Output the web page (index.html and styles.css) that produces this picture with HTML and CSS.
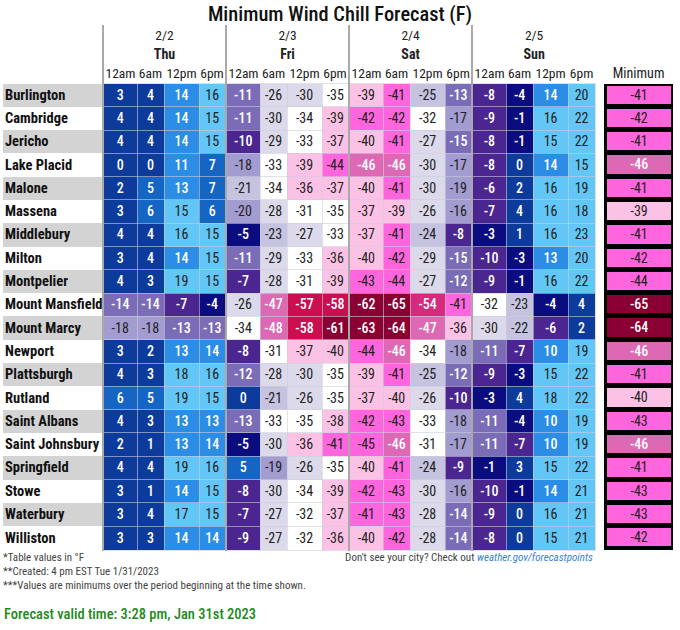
FILE: index.html
```html
<!DOCTYPE html>
<html lang="en">
<head>
<meta charset="utf-8">
<title>Minimum Wind Chill Forecast (F)</title>
<link rel="stylesheet" href="styles.css">
</head>
<body>
<div class="page">
  <h1 class="title">Minimum Wind Chill Forecast (F)</h1>
  <table class="grid">
    <colgroup>
      <col class="w-name">
      <col class="w-a"><col class="w-b"><col class="w-c"><col class="w-d">
      <col class="w-a"><col class="w-b"><col class="w-c"><col class="w-d">
      <col class="w-a"><col class="w-b"><col class="w-c"><col class="w-d">
      <col class="w-a"><col class="w-b"><col class="w-c"><col class="w-d">
      <col class="w-gap">
      <col class="w-min">
    </colgroup>
    <thead>
      <tr class="h-date">
        <th class="blank"></th>
        <th colspan="4" class="grp">2/2</th>
        <th colspan="4" class="grp">2/3</th>
        <th colspan="4" class="grp">2/4</th>
        <th colspan="4" class="grp">2/5</th>
        <th class="blank"></th>
        <th class="blank"></th>
      </tr>
      <tr class="h-day">
        <th class="blank"></th>
        <th colspan="4" class="grp">Thu</th>
        <th colspan="4" class="grp">Fri</th>
        <th colspan="4" class="grp">Sat</th>
        <th colspan="4" class="grp">Sun</th>
        <th class="blank"></th>
        <th class="blank"></th>
      </tr>
      <tr class="h-time">
        <th class="blank"></th>
        <th class="grp">12am</th><th>6am</th><th>12pm</th><th>6pm</th>
        <th class="grp">12am</th><th>6am</th><th>12pm</th><th>6pm</th>
        <th class="grp">12am</th><th>6am</th><th>12pm</th><th>6pm</th>
        <th class="grp">12am</th><th>6am</th><th>12pm</th><th>6pm</th>
        <th class="blank"></th>
        <th class="min-head">Minimum</th>
      </tr>
    </thead>
    <tbody id="rows"></tbody>
  </table>
  <div class="notes">
    <div class="notes-left">
      <div>*Table values in °F</div>
      <div>**Created: 4 pm EST Tue 1/31/2023</div>
      <div>***Values are minimums over the period beginning at the time shown.</div>
    </div>
    <div class="notes-right">Don't see your city? Check out <a class="link" href="#">weather.gov/forecastpoints</a></div>
  </div>
  <div class="valid">Forecast valid time: 3:28 pm, Jan 31st 2023</div>
</div>
<script src="script.js"></script>
</body>
</html>
```
FILE: styles.css
```css
html, body {
  margin: 0;
  padding: 0;
  background: #ffffff;
}
body {
  font-family: "Roboto Condensed", Roboto, "Liberation Sans", sans-serif;
  font-stretch: 87.5%;
  color: #222222;
}
.page {
  width: 680px;
  height: 630px;
  overflow: hidden;
}
.title {
  margin: 0;
  height: 25px;
  line-height: 28px;
  font-size: 20.4px;
  font-weight: 500;
  text-align: center;
  color: #111;
}
.grid {
  margin-left: 3px;
  border-collapse: collapse;
  table-layout: fixed;
  width: 670px;
}
.w-name { width: 100px; }
.w-a { width: 34px; }
.w-b { width: 27px; }
.w-c { width: 35px; }
.w-d { width: 27px; }
.w-gap { width: 9px; }
.w-min { width: 69px; }

.grid th {
  padding: 0;
  font-weight: 400;
  font-size: 13.5px;
  white-space: nowrap;
  text-align: center;
  color: #222;
}
.grid th.grp {
  border-left: 2px solid #a9a9a9;
}
.h-date th { height: 19px; line-height: 19px; padding-top: 1px; }
.h-day th { height: 19px; line-height: 19px; font-weight: 700; font-size: 14px; }
.h-day th.blank { font-weight: 400; }
.h-time th { height: 19px; line-height: 19px; }
.h-time th.min-head { font-size: 14px; }

.grid tbody tr { height: 23.3px; }
.grid td {
  padding: 0;
  line-height: 19px;
  text-align: center;
  font-size: 14px;
  white-space: nowrap;
  border: 1px solid rgba(205, 205, 220, 0.6);
}
.grid td.name {
  text-align: left;
  padding-left: 2px;
  font-weight: 700;
  font-size: 14.5px;
  border: none;
  color: #111;
}
.grid tr.odd td.name { background: #d3d3d3; }
.grid td.grp { border-left: 2px solid #a9a9a9; }
.grid td.gap { border: none; background: #fff; }
.grid td.min {
  border: none;
  background: #000;
  padding: 2px 2px 3px 3px;
}
.grid tr.last td.min { padding-bottom: 4px; }
.min-box {
  height: 18.3px;
  line-height: 18.3px;
}

.light { color: #222; font-weight: 400; }
.dark { color: #ffffff; font-weight: 500; }

.c15 { background: #62c6f6; }
.c10 { background: #2b8de6; }
.c5  { background: #1565c4; }
.c0  { background: #0c3b9c; }
.n1  { background: #0b0c80; }
.n2  { background: #4b2690; }
.n3  { background: #7a6cb6; }
.n4  { background: #a39cd0; }
.n5  { background: #c6c3e0; }
.n6  { background: #dcdaea; }
.n7  { background: #ffffff; }
.n8  { background: #fcc2e6; }
.n9  { background: #ff66dd; }
.n10 { background: #dd68b4; }
.n11 { background: #d62a7c; }
.n12 { background: #c90f50; }
.n13 { background: #8a0032; }

.notes {
  display: flex;
  justify-content: space-between;
  width: 590px;
  margin-left: 3px;
  font-size: 11px;
  line-height: 14px;
  color: #444;
}
.notes-right {
  color: #444;
}
.link {
  color: #3a7fd8;
  font-style: italic;
  text-decoration: none;
}
.valid {
  margin: 13px 0 0 4px;
  font-size: 14.5px;
  line-height: 17px;
  font-weight: 500;
  color: #1a8a1a;
}
```
FILE: script.js
```js
var data = [
  ["Burlington", [3,4,14,16,-11,-26,-30,-35,-39,-41,-25,-13,-8,-4,14,20], -41],
  ["Cambridge", [4,4,14,15,-11,-30,-34,-39,-42,-42,-32,-17,-9,-1,16,22], -42],
  ["Jericho", [4,4,14,15,-10,-29,-33,-37,-40,-41,-27,-15,-8,-1,15,22], -41],
  ["Lake Placid", [0,0,11,7,-18,-33,-39,-44,-46,-46,-30,-17,-8,0,14,15], -46],
  ["Malone", [2,5,13,7,-21,-34,-36,-37,-40,-41,-30,-19,-6,2,16,19], -41],
  ["Massena", [3,6,15,6,-20,-28,-31,-35,-37,-39,-26,-16,-7,4,16,18], -39],
  ["Middlebury", [4,4,16,15,-5,-23,-27,-33,-37,-41,-24,-8,-3,1,16,23], -41],
  ["Milton", [3,4,14,15,-11,-29,-33,-36,-40,-42,-29,-15,-10,-3,13,20], -42],
  ["Montpelier", [4,3,19,15,-7,-28,-31,-39,-43,-44,-27,-12,-9,-1,16,22], -44],
  ["Mount Mansfield", [-14,-14,-7,-4,-26,-47,-57,-58,-62,-65,-54,-41,-32,-23,-4,4], -65],
  ["Mount Marcy", [-18,-18,-13,-13,-34,-48,-58,-61,-63,-64,-47,-36,-30,-22,-6,2], -64],
  ["Newport", [3,2,13,14,-8,-31,-37,-40,-44,-46,-34,-18,-11,-7,10,19], -46],
  ["Plattsburgh", [4,3,18,16,-12,-28,-30,-35,-39,-41,-25,-12,-9,-3,15,22], -41],
  ["Rutland", [6,5,19,15,0,-21,-26,-35,-37,-40,-26,-10,-3,4,18,22], -40],
  ["Saint Albans", [4,3,13,13,-13,-33,-35,-38,-42,-43,-33,-18,-11,-4,10,19], -43],
  ["Saint Johnsbury", [2,1,13,14,-5,-30,-36,-41,-45,-46,-31,-17,-11,-7,10,19], -46],
  ["Springfield", [4,4,19,16,5,-19,-26,-35,-40,-41,-24,-9,-1,3,15,22], -41],
  ["Stowe", [3,1,14,15,-8,-30,-34,-39,-42,-43,-30,-16,-10,-1,14,21], -43],
  ["Waterbury", [3,4,17,15,-7,-27,-32,-37,-41,-43,-28,-14,-9,0,16,21], -43],
  ["Williston", [3,3,14,14,-9,-27,-32,-36,-40,-42,-28,-14,-8,0,15,21], -42]
];

function binClass(v) {
  if (v >= 15) return "c15";
  if (v >= 10) return "c10";
  if (v >= 5) return "c5";
  if (v >= 0) return "c0";
  var k = Math.ceil(-v / 5);
  if (k > 13) k = 13;
  return "n" + k;
}
var lightBins = { c15: 1, n4: 1, n5: 1, n6: 1, n7: 1, n8: 1, n9: 1 };
function toneClass(b) { return lightBins[b] ? "light" : "dark"; }

var tbody = document.getElementById("rows");
data.forEach(function (row, i) {
  var tr = document.createElement("tr");
  var cls = (i % 2 === 0) ? "odd" : "even";
  if (i === data.length - 1) cls += " last";
  tr.className = cls;
  var name = document.createElement("td");
  name.className = "name";
  name.textContent = row[0];
  tr.appendChild(name);
  row[1].forEach(function (v, j) {
    var td = document.createElement("td");
    var b = binClass(v);
    td.className = b + " " + toneClass(b) + (j % 4 === 0 ? " grp" : "");
    td.textContent = String(v);
    tr.appendChild(td);
  });
  var gap = document.createElement("td");
  gap.className = "gap";
  tr.appendChild(gap);
  var min = document.createElement("td");
  min.className = "min";
  var box = document.createElement("div");
  var mb = binClass(row[2]);
  box.className = "min-box " + mb + " " + toneClass(mb);
  box.textContent = String(row[2]);
  min.appendChild(box);
  tr.appendChild(min);
  tbody.appendChild(tr);
});
```
